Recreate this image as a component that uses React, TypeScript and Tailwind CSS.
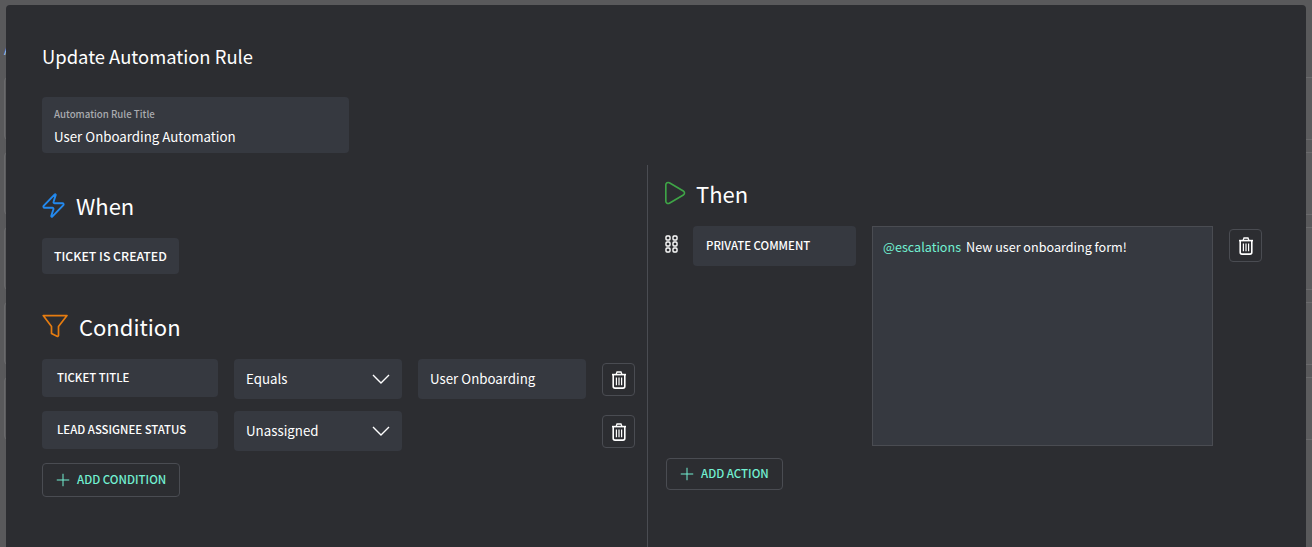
import React from 'react';
import { Play, Plus, Zap } from 'lucide-react';

const fieldClass = 'rounded bg-[#363940] text-white';

const Lead = ({ label, width, height, padding }: { label: string; width: string; height: string; padding: string }) => (
  <div className={`flex items-center rounded bg-[#363940] pb-px text-[11.4px] font-medium whitespace-nowrap text-white ${padding} ${width} ${height}`}>
    {label}
  </div>
);

const TrashIcon = () => (
  <svg width="16" height="18" viewBox="0 0 16 18" fill="none" stroke="white" strokeWidth="1.6">
    <path d="M1 3.6h14" />
    <path d="M5.2 3.2 6 1h4l.8 2.2" strokeWidth="1.3" />
    <path d="M2.2 3.8v11.4c0 1 .7 1.9 1.8 1.9h8c1.1 0 1.8-.9 1.8-1.9V3.8" />
    <path d="M5.4 6.4v7.8M8 6.4v7.8M10.6 6.4v7.8" strokeWidth="1.2" />
  </svg>
);

const TrashButton = () => (
  <button className="mt-1 flex h-[33px] w-[33px] items-center justify-center rounded border border-[#4a4c52]">
    <TrashIcon />
  </button>
);

const SelectField = ({ value }: { value: string }) => (
  <div className={`${fieldClass} flex h-10 w-[168px] items-center justify-between pl-3 pr-[12px] text-[13.3px]`}>
    <span>{value}</span>
    <svg width="18" height="10" viewBox="0 0 18 10" fill="none" stroke="white" strokeWidth="1.4">
      <path d="M1 1l8 8 8-8" />
    </svg>
  </div>
);

const AddButton = ({ label, width, height }: { label: string; width: string; height: string }) => (
  <button className={`flex items-center gap-1 rounded border border-[#4a4c52] pb-px pl-[10px] text-[11.5px] font-medium whitespace-nowrap text-[#72f0d2] ${width} ${height}`}>
    <Plus size={20} strokeWidth={1.2} />
    {label}
  </button>
);

const Heading = ({ icon, label, gap }: { icon: React.ReactNode; label: string; gap: string }) => (
  <div className={`flex items-center text-[22px] leading-8 text-white ${gap}`}>
    {icon}
    <span>{label}</span>
  </div>
);

const FunnelIcon = () => (
  <svg width="26" height="24" viewBox="0 0 26 24" fill="none" stroke="#e67c10" strokeWidth="1.7" strokeLinejoin="round">
    <path d="M1.2 1.6H25L16.5 12.5v9.1l-1 .9-6-3v-7z" />
  </svg>
);

const DragDots = () => (
  <svg width="14" height="18" viewBox="0 0 14 18" fill="none" stroke="white" strokeWidth="1.4">
    <rect x="1" y="1" width="4" height="4" rx="1" />
    <rect x="8" y="1" width="4" height="4" rx="1" />
    <rect x="1" y="7" width="4" height="4" rx="1" />
    <rect x="8" y="7" width="4" height="4" rx="1" />
    <rect x="1" y="13" width="4" height="4" rx="1" />
    <rect x="8" y="13" width="4" height="4" rx="1" />
  </svg>
);

const BackgroundRows = () => (
  <div className="flex w-[1330px] flex-col gap-3 pl-1 pt-[41px]">
    <div className="-mb-3 h-[36px] text-xs leading-[18px] text-[#9cc4f5]">A</div>
    {[0, 1, 2, 3, 4].map((row) => (
      <div key={row} className="h-[63px] rounded border border-[#6a6a6c] bg-[#5c5c5e]" />
    ))}
  </div>
);

export default function App() {
  return (
    <div className="relative h-[547px] w-[1312px] overflow-hidden bg-[#59595b] font-['Noto_Sans_CJK_SC','Noto_Sans',sans-serif]">
      <BackgroundRows />

      <div className="absolute left-[6px] top-[5px] h-[600px] w-[1300px] rounded-t bg-[#2c2d31]">
        <div className="px-9 pt-[38px]">
          <h1 className="text-[18.4px] leading-[26px] text-white">Update Automation Rule</h1>
          <div className={`${fieldClass} mt-[28px] flex h-14 w-[307px] flex-col px-3 pt-[10px]`}>
            <span className="text-[9.7px] leading-[15px] font-medium text-[#a9abaf]">Automation Rule Title</span>
            <span className="mt-[5px] text-[13.3px] leading-5">User Onboarding Automation</span>
          </div>
        </div>

        <div className="mt-3 flex">
          <div className="w-[641px] pl-9 pt-[24px]">
            <Heading gap="gap-[9px]" label="When" icon={<Zap size={27} strokeWidth={1.7} className="-ml-[2px] text-[#2389ee]" />} />
            <div className="mt-[17px] flex h-9 w-[137px] items-center rounded bg-[#363940] px-3 text-[12.3px] font-medium whitespace-nowrap text-white">
              TICKET IS CREATED
            </div>

            <div className="mt-[36px]">
              <Heading gap="gap-[11px]" label="Condition" icon={<FunnelIcon />} />
            </div>

            <div className="mt-[17px] flex items-start gap-4">
              <Lead label="TICKET TITLE" width="w-[176px]" height="h-[38px]" padding="px-[15px]" />
              <SelectField value="Equals" />
              <div className={`${fieldClass} flex h-10 w-[168px] items-center px-3 text-[13.3px]`}>User Onboarding</div>
              <TrashButton />
            </div>
            <div className="mt-3 flex items-start gap-4">
              <Lead label="LEAD ASSIGNEE STATUS" width="w-[176px]" height="h-[38px]" padding="px-[15px]" />
              <SelectField value="Unassigned" />
              <div className="w-[168px]" />
              <TrashButton />
            </div>
            <div className="mt-3">
              <AddButton label="ADD CONDITION" width="w-[138px]" height="h-[34px]" />
            </div>
          </div>

          <div className="h-[400px] flex-1 border-l border-[#4a4c52] pl-[17px] pt-[12px]">
            <Heading gap="gap-[8px]" label="Then" icon={<Play size={28} strokeWidth={1.4} className="-ml-[5px] text-[#3fa547]" />} />
            <div className="mt-[17px] flex items-start">
              <div className="mt-[9px] w-[28px]">
                <DragDots />
              </div>
              <Lead label="PRIVATE COMMENT" width="w-[163px]" height="h-10" padding="px-[13px]" />
              <div className="ml-4 h-[220px] w-[341px] border border-[#4a4c52] bg-[#363940] px-[10px] py-[11px] text-[12.6px] text-white">
                <span className="text-[#72f0d2]">@escalations</span>
                <span className="ml-[5px]">New user onboarding form!</span>
              </div>
              <div className="ml-4 -mt-px">
                <TrashButton />
              </div>
            </div>
            <div className="ml-px mt-3">
              <AddButton label="ADD ACTION" width="w-[117px]" height="h-8" />
            </div>
          </div>
        </div>
      </div>
    </div>
  );
}
